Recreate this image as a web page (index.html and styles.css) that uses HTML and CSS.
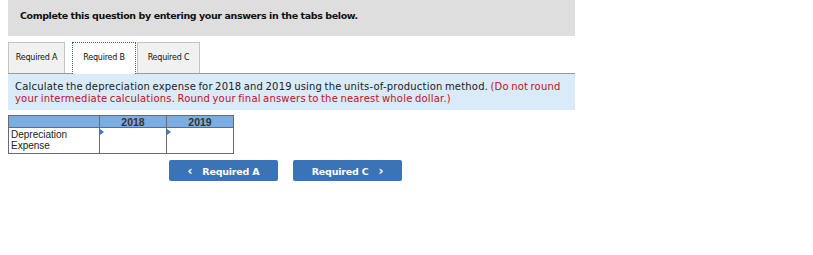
FILE: index.html
```html
<!DOCTYPE html>
<html>
	<head>
		<meta charset="utf-8">
		<title>Required B</title>
		<link rel="stylesheet" href="styles.css">
	</head>
	<body>
		<div class="question">
			<div class="banner">Complete this question by entering your answers in the tabs below.</div>
			<ul class="tabs">
				<li class="tab">Required A</li>
				<li class="tab active">Required B</li>
				<li class="tab">Required C</li>
			</ul>
			<div class="prompt">
				Calculate the depreciation expense for 2018 and 2019 using the units-of-production method.
				<span class="hint">(Do not round your intermediate calculations. Round your final answers to the nearest whole dollar.)</span>
			</div>
			<table class="grid">
				<tr>
					<th class="label"></th>
					<th class="col">2018</th>
					<th class="col">2019</th>
				</tr>
				<tr>
					<td class="label">Depreciation Expense</td>
					<td class="cell"><span class="flag"></span></td>
					<td class="cell"><span class="flag"></span></td>
				</tr>
			</table>
			<div class="nav">
				<button class="btn"><span class="chev">&lsaquo;</span>Required A</button>
				<button class="btn">Required C<span class="chev right">&rsaquo;</span></button>
			</div>
		</div>
	</body>
</html>
```

FILE: styles.css
```css
*{
	margin: 0;
	padding: 0;
	box-sizing: border-box;
}
body{
	margin: 0 8px;
	background: #fff;
	font-family: "DejaVu Sans", Verdana, sans-serif;
}
ul{
	list-style: none;
}
.question{
	width: 567px;
}
.banner{
	height: 36px;
	background-color: #dedede;
	padding: 10px 0 0 12px;
	font-size: 9.5px;
	letter-spacing: -0.4px;
	font-weight: bold;
	color: #111;
}
.tabs{
	display: flex;
	margin-top: 6px;
	height: 32px;
	border-bottom: 1px solid #999;
}
.tab{
	width: 57px;
	height: 31px;
	margin-right: 7px;
	border: 1px solid #c4c4c4;
	border-bottom: none;
	background-color: #f1f1f1;
	font-size: 8px;
	letter-spacing: -0.2px;
	color: #111;
	text-align: center;
	line-height: 30px;
}
.tab.active{
	width: 64px;
	margin-right: 1px;
	background-color: #fff;
	border: 1px dotted #3a5f96;
	border-bottom: none;
	height: 32px;
}
.tab:last-child{
	width: 63px;
}
.prompt{
	background-color: #d9eaf8;
	padding: 7px 7px 6px 7px;
	font-size: 10px;
	letter-spacing: 0.2px;
	word-spacing: -1px;
	line-height: 12px;
	color: #222;
	height: 36px;
}
.hint{
	color: #c0102a;
}
.grid{
	margin-top: 5px;
	border-collapse: collapse;
	font-family: "Liberation Sans", Arial, sans-serif;
	font-size: 10px;
	color: #222;
}
.grid th, .grid td{
	border: 1px solid #6b6b6b;
}
.grid th{
	background-color: #7aaee2;
	height: 12px;
	font-size: 10.5px;
	line-height: 10px;
	color: #333;
}
.grid .label{
	width: 91px;
	text-align: left;
	vertical-align: top;
	padding: 1px 2px;
	line-height: 11px;
}
.grid .col{
	width: 67px;
}
.grid .cell{
	height: 26px;
	vertical-align: top;
	position: relative;
}
.flag{
	position: absolute;
	left: 0;
	top: 1px;
	width: 0;
	height: 0;
	border-top: 3px solid transparent;
	border-bottom: 3px solid transparent;
	border-left: 4px solid #3a7cc8;
}
.nav{
	display: flex;
	gap: 15px;
	margin: 6px 0 0 161px;
}
.btn{
	width: 109px;
	height: 21px;
	border: none;
	border-radius: 2px;
	background-color: #3a74b7;
	color: #fff;
	font-family: "DejaVu Sans", Verdana, sans-serif;
	font-size: 9.5px;
	letter-spacing: -0.2px;
	font-weight: bold;
}
.chev{
	margin-right: 10px;
	font-size: 12px;
}
.chev.right{
	margin: 0 0 0 10px;
}
```
